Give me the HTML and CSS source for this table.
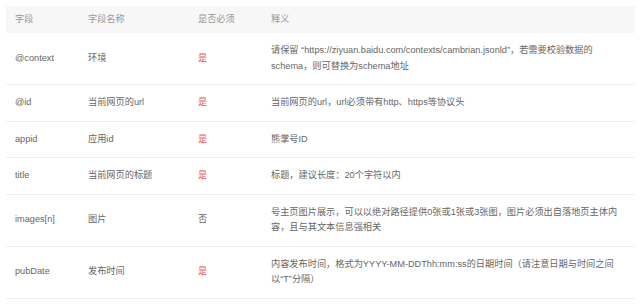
FILE: index.html
```html
<!DOCTYPE html>
<html lang="zh-CN">
<head>
<meta charset="utf-8">
<title>字段说明</title>
<link rel="stylesheet" href="styles.css">
</head>
<body>
<table class="spec">
  <colgroup>
    <col class="c-field">
    <col class="c-name">
    <col class="c-req">
    <col class="c-desc">
  </colgroup>
  <thead>
    <tr><th>字段</th><th>字段名称</th><th>是否必须</th><th>释义</th></tr>
  </thead>
  <tbody>
    <tr><td>@context</td><td>环境</td><td class="yes">是</td><td>请保留 “https://ziyuan.baidu.com/contexts/cambrian.jsonld”，若需要校验数据的schema，则可替换为schema地址</td></tr>
    <tr><td>@id</td><td>当前网页的url</td><td class="yes">是</td><td>当前网页的url，url必须带有http、https等协议头</td></tr>
    <tr><td>appid</td><td>应用id</td><td class="yes">是</td><td>熊掌号ID</td></tr>
    <tr><td>title</td><td>当前网页的标题</td><td class="yes">是</td><td>标题，建议长度：20个字符以内</td></tr>
    <tr><td>images[n]</td><td>图片</td><td>否</td><td>号主页图片展示，可以以绝对路径提供0张或1张或3张图，图片必须出自落地页主体内容，且与其文本信息强相关</td></tr>
    <tr><td>pubDate</td><td>发布时间</td><td class="yes">是</td><td>内容发布时间，格式为YYYY-MM-DDThh:mm:ss的日期时间（请注意日期与时间之间以“T”分隔）</td></tr>
  </tbody>
</table>
</body>
</html>
```

FILE: styles.css
```css
html, body {
  margin: 0;
  padding: 0;
  background: #fff;
}
body {
  padding: 6px 5px 6px 6px;
  font-family: "Liberation Sans", "Noto Sans CJK SC", sans-serif;
  font-size: 9.2px;
  color: #666;
}
.spec {
  width: 629px;
  border-collapse: collapse;
  table-layout: fixed;
}
.c-field { width: 73px; }
.c-name { width: 110px; }
.c-req { width: 73px; }
.c-desc { width: auto; }
.spec th {
  background: #f7f7f7;
  color: #999;
  font-weight: normal;
  text-align: left;
  line-height: 15.5px;
  padding: 5.75px 9px;
}
.spec td {
  line-height: 15.5px;
  padding: 10px 16.5px 10px 9px;
  border-bottom: 1px solid #f0f0f0;
  vertical-align: middle;
}
.spec td.yes {
  color: #e05a5a;
}
```
